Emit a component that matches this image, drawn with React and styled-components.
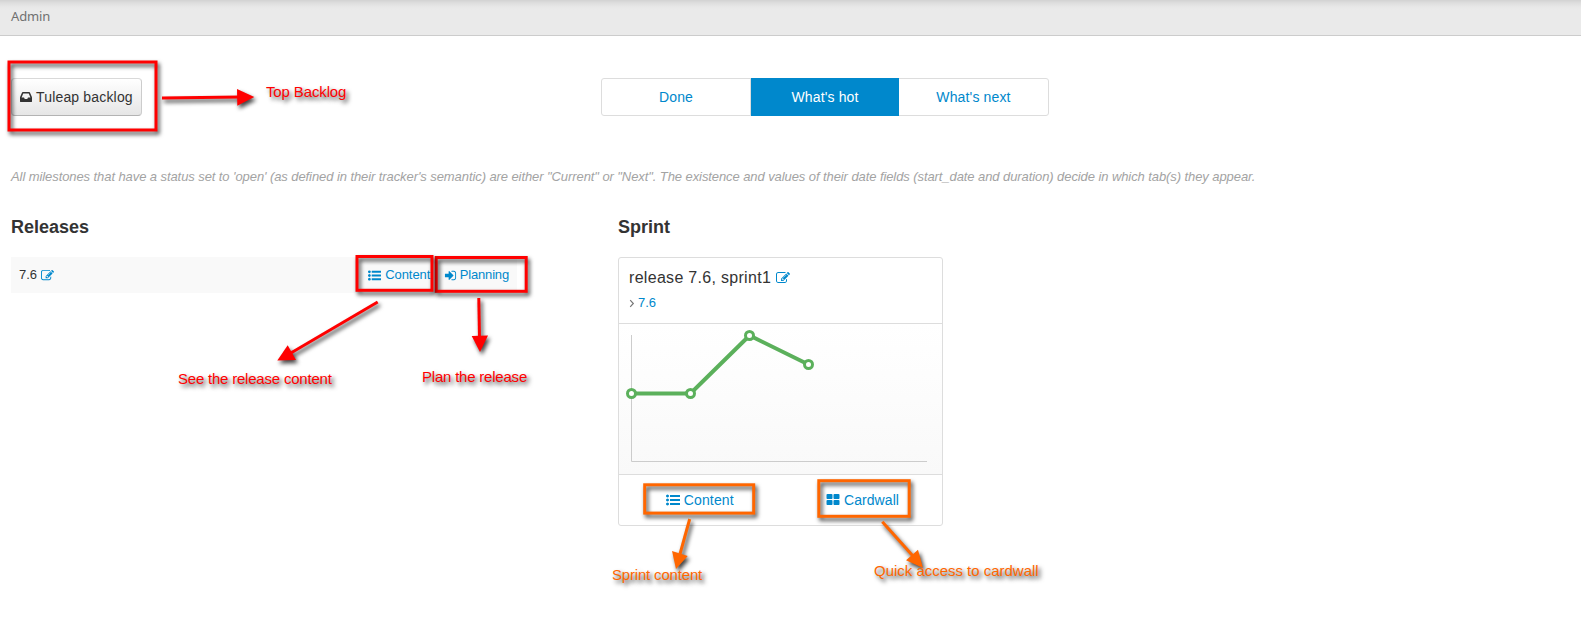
import React from 'react';
import styled, { createGlobalStyle } from 'styled-components';

const GlobalStyle = createGlobalStyle`
  *, *::before, *::after { box-sizing: border-box; }
  html, body { margin: 0; padding: 0; background: #fff; }
  body {
    font-family: "Liberation Sans", Helvetica, Arial, sans-serif;
    font-size: 13px;
    line-height: 20px;
    color: #333;
    overflow: hidden;
  }
`;

const LINK = '#0088cc';
const BORDER = '#dddddd';
const RED = '#ff0000';
const ORANGE = '#ff6600';

const Page = styled.div`
  position: relative;
  width: 100%;
  height: 626px;
  overflow: hidden;
`;

const TopBar = styled.header`
  height: 36px;
  padding: 6px 11px 0;
  background: linear-gradient(#d2d2d2, #dedede 3px, #e8e8e8 7px, #eaeaea 10px);
  border-bottom: 1px solid #ccc;
  font-family: "Noto Sans", "Open Sans", sans-serif;
  font-size: 13px;
  letter-spacing: -0.15px;
  color: #707070;
`;

const Content = styled.main`
  padding: 42px 11px 0;
`;

const Toolbar = styled.div`
  display: flex;
  align-items: flex-start;
`;

const BacklogButton = styled.button`
  display: flex;
  align-items: center;
  gap: 3px;
  width: 131px;
  height: 38px;
  padding: 0 0 0 7px;
  border: 1px solid #ccc;
  border-color: #d9d9d9 #ccc #b3b3b3;
  border-radius: 4px;
  background: linear-gradient(#ffffff, #e6e6e6);
  color: #333;
  font: 14px "Liberation Sans", Helvetica, Arial, sans-serif;
  letter-spacing: 0.17px;
  white-space: nowrap;
`;

const Pills = styled.nav`
  display: grid;
  grid-template-columns: 149px 148px 149px;
  width: 448px;
  height: 38px;
  margin-left: 459px;
  border: 1px solid ${BORDER};
  border-radius: 3px;
`;

const Pill = styled.a`
  margin: ${p => (p.$active ? '-1px 0' : '0')};
  border-right: ${p => (p.$divided ? `1px solid ${BORDER}` : '0')};
  background: ${p => (p.$active ? LINK : 'transparent')};
  color: ${p => (p.$active ? '#fff' : LINK)};
  font-size: 14px;
  line-height: ${p => (p.$active ? 38 : 36)}px;
  letter-spacing: 0.15px;
  text-align: center;
`;

const Hint = styled.p`
  margin: 51px 0 0;
  font-size: 13px;
  line-height: 20px;
  font-style: italic;
  color: #a3a3a3;
  white-space: nowrap;
  letter-spacing: -0.083px;
`;

const Columns = styled.div`
  display: grid;
  grid-template-columns: 506px 325px;
  column-gap: 101px;
  margin-top: 29px;
`;

const Heading = styled.h2`
  margin: 0 0 18px;
  font-size: 18px;
  line-height: 23px;
  font-weight: bold;
`;

const ReleaseRow = styled.div`
  display: flex;
  align-items: center;
  height: 36px;
  padding: 0 8px;
  background: #f9f9f9;
`;

const ReleaseName = styled.span`
  display: flex;
  align-items: center;
  gap: 4px;
  margin-right: auto;
`;

const IconLink = styled.a`
  display: inline-flex;
  align-items: center;
  gap: ${p => p.$gap || 4}px;
  margin-left: ${p => p.$indent || 0}px;
  color: ${LINK};
  letter-spacing: ${p => p.$tracking || 0}px;
`;

const Card = styled.section`
  height: 269px;
  border: 1px solid ${BORDER};
  border-radius: 3px;
`;

const CardHeader = styled.div`
  height: 66px;
  padding: 10px;
  border-bottom: 1px solid ${BORDER};
`;

const CardTitle = styled.div`
  display: flex;
  align-items: center;
  gap: 5px;
  font-size: 16px;
  line-height: 20px;
  letter-spacing: 0.3px;
`;

const Parent = styled.div`
  display: flex;
  align-items: center;
  gap: 3px;
  margin-top: 5px;
  color: ${LINK};
`;

const ChartArea = styled.div`
  height: 151px;
  border-bottom: 1px solid ${BORDER};
  background: linear-gradient(#ffffff, #f9f9f9);
`;

const CardFooter = styled.div`
  display: grid;
  grid-template-columns: 1fr 1fr;
  height: 50px;
  align-items: center;
  justify-items: center;
  font-size: 14px;
`;

const Icon = styled.svg`
  flex: none;
  display: block;
  fill: currentColor;
  color: ${p => p.$color || 'inherit'};
`;

const Overlay = styled.div`
  position: absolute;
  inset: 0;
  pointer-events: none;
`;

const Markup = styled.svg`
  position: absolute;
  inset: 0;
`;

const Shadowed = styled.g`
  filter: drop-shadow(2.5px 3px 2.2px rgba(0, 0, 0, 0.75));
`;

const Label = styled.span`
  position: absolute;
  left: ${p => p.$x}px;
  top: ${p => p.$y}px;
  color: ${p => p.$color};
  font-size: 15px;
  line-height: 18px;
  letter-spacing: ${p => p.$tracking || 0}px;
  white-space: nowrap;
  text-shadow: 2.5px 3px 4px rgba(0, 0, 0, 0.75);
`;

const BULLET = 'q0 80-56 136t-136 56-136-56-56-136 56-136 136-56 136 56 56 136z';
const LINE = 'v192q0 13-9.5 22.5t-22.5 9.5h-1216q-13 0-22.5-9.5t-9.5-22.5v-192q0-13 9.5-22.5t22.5-9.5h1216q13 0 22.5 9.5t9.5 22.5z';
const TILE = 'v384q0 52-38 90t-90 38h-512q-52 0-90-38t-38-90v-384q0-52 38-90t90-38h512q52 0 90 38t38 90z';

const PATHS = {
  inbox: 'M1151 960h316q-1-3-2.5-8t-2.5-8l-212-496h-708l-212 496q-1 2-2.5 8t-2.5 8h316l95 192h320zm513 30v482q0 26-19 45t-45 19h-1408q-26 0-45-19t-19-45v-482q0-62 25-123l238-552q10-25 36.5-42t52.5-17h832q26 0 52.5 17t36.5 42l238 552q25 61 25 123z',
  edit: 'M888 1184l116-116-152-152-116 116v56h96v96h56zm440-720q-16-16-33 1l-350 350q-17 17-1 33t33-1l350-350q17-17 1-33zm80 594v190q0 119-84.5 203.5t-203.5 84.5h-832q-119 0-203.5-84.5t-84.5-203.5v-832q0-119 84.5-203.5t203.5-84.5h832q63 0 117 25 15 7 18 23 3 17-9 29l-49 49q-14 14-32 8-23-6-45-6h-832q-66 0-113 47t-47 113v832q0 66 47 113t113 47h832q66 0 113-47t47-113v-126q0-13 9-22l64-64q15-15 35-7t20 29zm-96-738l288 288-672 672h-288v-288zm444 132l-92 92-288-288 92-92q28-28 68-28t68 28l152 152q28 28 28 68t-28 68z',
  list: [384, 896, 1408].map(y => `M384 ${y}${BULLET}M1792 ${y - 96}${LINE}`).join(''),
  signIn: 'M1312 896q0 26-19 45l-544 544q-19 19-45 19t-45-19-19-45v-288h-448q-26 0-45-19t-19-45v-384q0-26 19-45t45-19h448v-288q0-26 19-45t45-19 45 19l544 544q19 19 19 45zm352-352v704q0 119-84.5 203.5t-203.5 84.5h-320q-13 0-22.5-9.5t-9.5-22.5q0-4-1-20t-.5-26.5 3-23.5 10-19.5 20.5-6.5h320q66 0 113-47t47-113v-704q0-66-47-113t-113-47h-312l-11.5-1-11.5-3-8-5.5-7-9-2-13.5q0-4-1-20t-.5-26.5 3-23.5 10-19.5 20.5-6.5h320q119 0 203.5 84.5t84.5 203.5z',
  tiles: `M832 1024${TILE}M832 256${TILE}M1728 1024${TILE}M1728 256${TILE}`,
};

function Glyph({ name, size = 13, color }) {
  return (
    <Icon width={size} height={size} viewBox="0 0 1792 1792" $color={color} aria-hidden="true">
      <path d={PATHS[name]} />
    </Icon>
  );
}

const POINTS = [[12.5, 69.5], [71.5, 69.5], [130.5, 11.5], [189.5, 40.5]];

function Burndown() {
  return (
    <svg width="323" height="150" viewBox="0 0 323 150">
      <path d="M12.5 11v126.5H308" fill="none" stroke="#ccc" />
      <polyline points={POINTS.join(' ')} fill="none" stroke="#5bb05b" strokeWidth="4" />
      {POINTS.map(([x, y]) => (
        <circle key={x} cx={x} cy={y} r="4" fill="#fff" stroke="#5bb05b" strokeWidth="3" />
      ))}
    </svg>
  );
}

/* Outer edges of each highlighted area: x, y, width, height. */
const FRAMES = [
  { color: RED, box: [7.5, 60.5, 150, 71] },
  { color: RED, box: [434.7, 256, 93, 36.8] },
  { color: RED, box: [355.5, 255, 78, 36.8] },
  { color: ORANGE, box: [643.2, 483.3, 112, 31.3] },
  { color: ORANGE, box: [817.3, 479.2, 93.4, 38.6] },
];

const ARROWS = [
  { color: RED, line: 'M162 98L240 97', head: '254.3,97 237,89 237.3,105.7' },
  { color: RED, line: 'M377.7 302L290 353.5', head: '277.3,360.5 287.7,345.3 296,360' },
  { color: RED, line: 'M478.8 298L479.5 338', head: '480,352 471.7,336 488,335.5' },
  { color: ORANGE, line: 'M689.7 519L680 554', head: '676,569 672,551 687.7,556' },
  { color: ORANGE, line: 'M882.3 521.7L912.5 555.5', head: '923,568 906,560.3 918,549.7' },
];

function Annotations() {
  return (
    <Overlay>
      <Markup width="1581" height="626">
        {FRAMES.map(({ color, box: [x, y, w, h] }) => (
          <Shadowed key={x}>
            <rect x={x + 1.5} y={y + 1.5} width={w - 3} height={h - 3} fill="none" stroke={color} strokeWidth="3" />
          </Shadowed>
        ))}
        {ARROWS.map(a => (
          <Shadowed key={a.line}>
            <path d={a.line} stroke={a.color} strokeWidth="3" />
            <polygon points={a.head} fill={a.color} />
          </Shadowed>
        ))}
      </Markup>
      <Label $color={RED} $x={266} $y={83} $tracking={-0.13}>Top Backlog</Label>
      <Label $color={RED} $x={178} $y={370} $tracking={-0.21}>See the release content</Label>
      <Label $color={RED} $x={422} $y={368} $tracking={-0.21}>Plan the release</Label>
      <Label $color={ORANGE} $x={612} $y={566} $tracking={-0.18}>Sprint content</Label>
      <Label $color={ORANGE} $x={874} $y={562} $tracking={-0.02}>Quick access to cardwall</Label>
    </Overlay>
  );
}

export default function App() {
  return (
    <>
      <GlobalStyle />
      <Page>
        <TopBar>Admin</TopBar>
        <Content>
          <Toolbar>
            <BacklogButton><Glyph name="inbox" size={14} />Tuleap backlog</BacklogButton>
            <Pills>
              <Pill $divided>Done</Pill>
              <Pill $active>What's hot</Pill>
              <Pill>What's next</Pill>
            </Pills>
          </Toolbar>
          <Hint>
            All milestones that have a status set to 'open' (as defined in their tracker's semantic) are either "Current" or "Next". The existence and values of their date fields (start_date and duration) decide in which tab(s) they appear.
          </Hint>
          <Columns>
            <div>
              <Heading>Releases</Heading>
              <ReleaseRow>
                <ReleaseName>7.6 <Glyph name="edit" color={LINK} /></ReleaseName>
                <IconLink $tracking={-0.08}><Glyph name="list" />Content</IconLink>
                <IconLink $indent={14} $gap={2.5} $tracking={-0.17}><Glyph name="signIn" />Planning</IconLink>
              </ReleaseRow>
            </div>
            <div>
              <Heading>Sprint</Heading>
              <Card>
                <CardHeader>
                  <CardTitle>release 7.6, sprint1 <Glyph name="edit" size={14} color={LINK} /></CardTitle>
                  <Parent>
                    <svg width="6" height="9" viewBox="0 0 6 9">
                      <path d="M1.2 1.2L4.3 4.5L1.2 7.8" fill="none" stroke="#777" strokeWidth="1.2" />
                    </svg>
                    7.6
                  </Parent>
                </CardHeader>
                <ChartArea><Burndown /></ChartArea>
                <CardFooter>
                  <IconLink $tracking={0.15}><Glyph name="list" size={14} />Content</IconLink>
                  <IconLink $tracking={0.08} $gap={3.5} $indent={3}><Glyph name="tiles" size={14} />Cardwall</IconLink>
                </CardFooter>
              </Card>
            </div>
          </Columns>
        </Content>
        <Annotations />
      </Page>
    </>
  );
}
